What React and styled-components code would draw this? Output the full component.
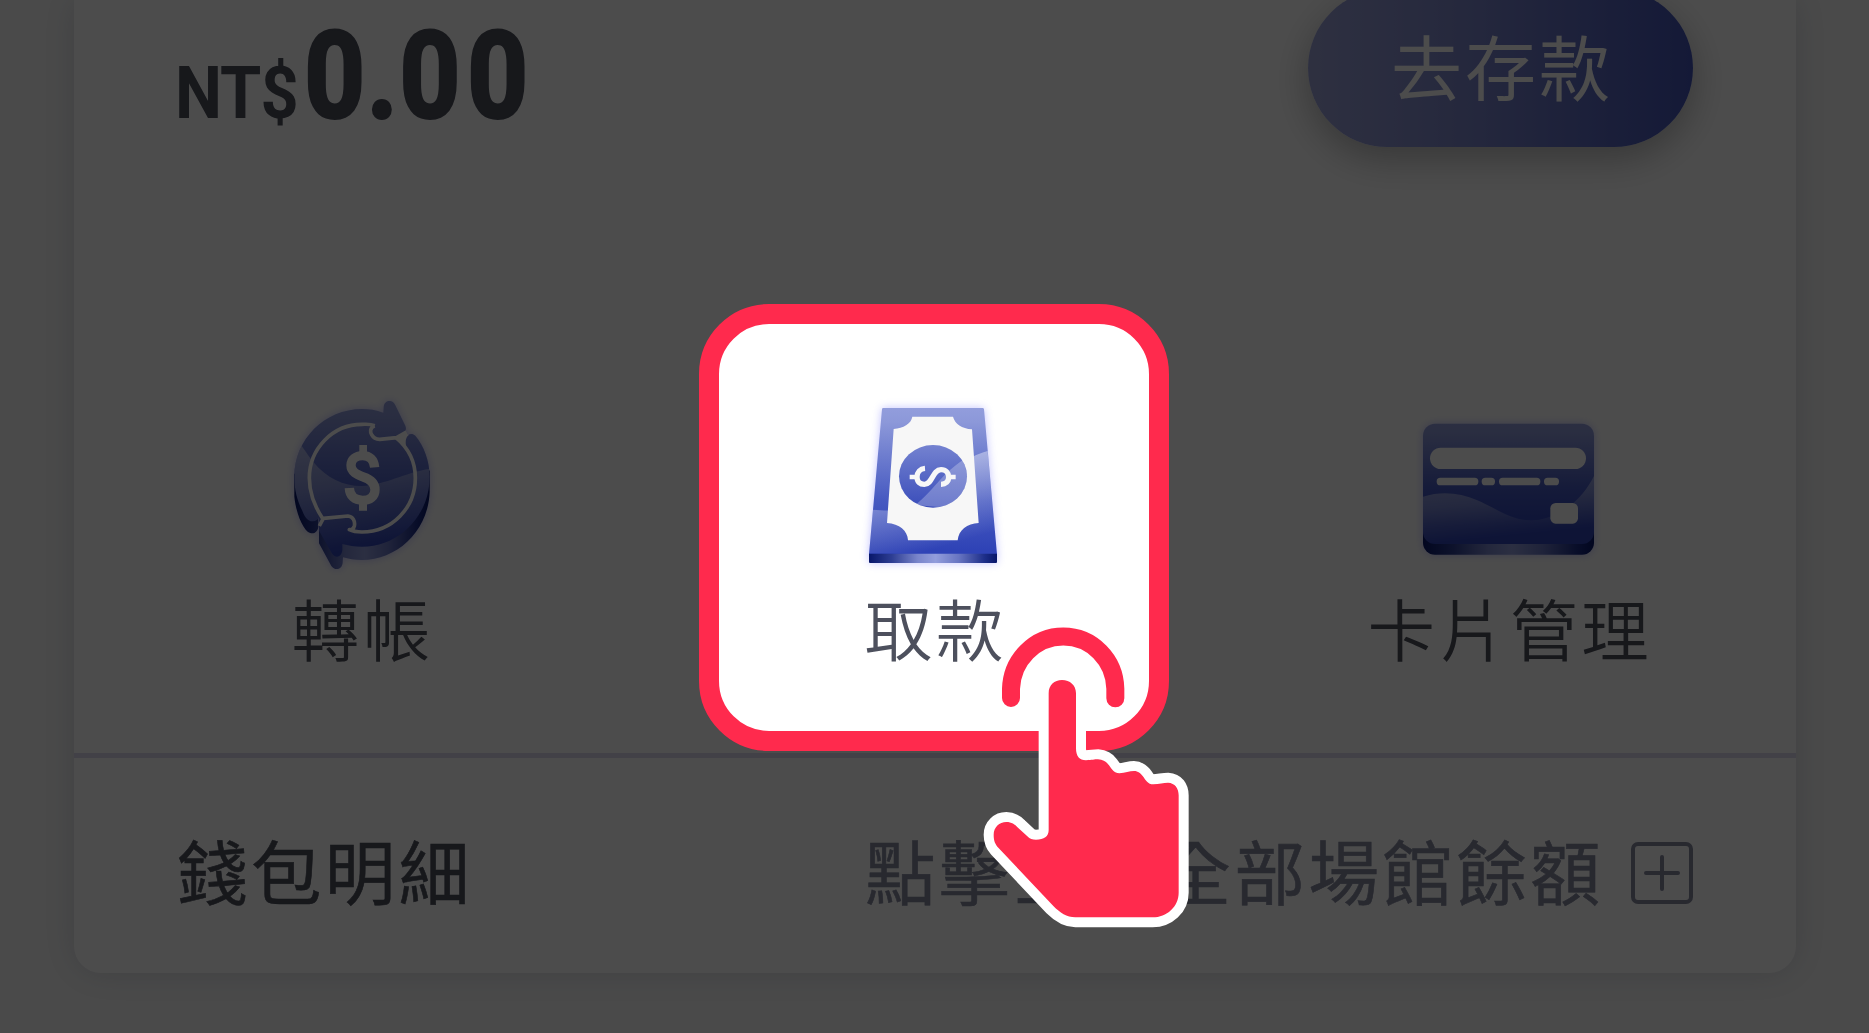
import React from "react";
import styled, { createGlobalStyle } from "styled-components";

const Global = createGlobalStyle`
  html, body { margin: 0; padding: 0; background: #f8f8f8; }
  * { box-sizing: border-box; }
`;

const Page = styled.main`
  position: relative;
  width: 1869px;
  height: 1033px;
  overflow: hidden;
  padding: 0 73px 60px 74px;
  background: #f8f8f8;
  color: #4d505d;
  font-family: "Noto Sans CJK TC", sans-serif;
`;

const Scrim = styled.div`
  position: absolute;
  inset: 0;
  z-index: 1;
  background: rgba(0, 0, 0, 0.7);
`;

const WalletCard = styled.section`
  display: flex;
  flex-direction: column;
  width: 1722px;
  height: 973px;
  border-radius: 0 0 27px 27px;
  background: #fff;
  box-shadow: 0 0 34px rgba(40, 50, 80, 0.16);
`;

const BalanceRow = styled.header`
  display: flex;
  justify-content: space-between;
  align-items: flex-start;
  height: 304px;
  padding: 0 103px 0 101px;
`;

const Balance = styled.div`
  display: flex;
  align-items: baseline;
  padding-top: 2px;
  font-family: Roboto, sans-serif;
  line-height: 148px;
`;

const Currency = styled.span`
  font-size: 72px;
  font-weight: 700;
  letter-spacing: -1px;
  transform: scaleX(0.925);
  transform-origin: 0 50%;
`;

const Amount = styled.span`
  margin-left: -4px;
  font-size: 123px;
  font-weight: 800;
  -webkit-text-stroke: 2px currentColor;
  transform: scaleX(0.865);
  transform-origin: 0 50%;
`;

const Whole = styled.span`
  letter-spacing: 1.3px;
`;

const Cents = styled.span`
  letter-spacing: 7.5px;
`;

const DepositButton = styled.button`
  width: 385px;
  height: 158px;
  margin-top: -11px;
  padding: 0 0 8px 3px;
  border: 0;
  border-radius: 79px;
  background: linear-gradient(90deg, #9ba2d8 0%, #7d87cd 40%, #4455b8 100%);
  box-shadow: 0 12px 36px rgba(0, 0, 0, 0.28);
  color: #fff;
  font: 400 71px/150px "Noto Sans CJK TC", sans-serif;
  letter-spacing: 3px;
`;

const Actions = styled.nav`
  display: grid;
  grid-template-columns: 574px 572px 576px;
  justify-items: center;
  height: 449px;
`;

const ActionTile = styled.div`
  position: relative;
  z-index: ${(p) => (p.$active ? 2 : 0)};
  display: flex;
  flex-direction: column;
  align-items: center;
  width: 470px;
  height: 447px;
  padding-top: 56px;
  border: 20px solid ${(p) => (p.$active ? "#ff2a4d" : "transparent")};
  border-radius: 70px;
  background: ${(p) => (p.$active ? "#fff" : "transparent")};
`;

const Icon = styled.svg`
  display: block;
  flex: none;
  width: ${(p) => p.$w}px;
  height: 200px;
  filter: drop-shadow(0 0 4px rgba(120, 120, 255, 0.45));
`;

const ActionLabel = styled.span`
  padding-left: 4px;
  font-size: 67.5px;
  font-weight: 350;
  line-height: 93px;
  letter-spacing: 3.8px;
  white-space: nowrap;
`;

const Details = styled.footer`
  display: flex;
  align-items: center;
  justify-content: space-between;
  height: 220px;
  padding: 6px 103px 0 103px;
  border-top: 5px solid #dddbee;
  font-size: 70.5px;
  letter-spacing: 3.4px;
  -webkit-text-stroke: 0.6px currentColor;
  white-space: nowrap;
`;

const Expand = styled.div`
  display: flex;
  align-items: center;
  gap: 27px;
  color: #85899f;
`;

const PlusBox = styled.svg`
  width: 62px;
  height: 62px;
  margin-top: 9px;
  fill: none;
  stroke: currentColor;
  stroke-width: 4;
  stroke-linecap: round;
`;

const TapHand = styled.svg`
  position: absolute;
  left: 980px;
  top: 623px;
  z-index: 3;
  width: 214px;
  height: 309px;
`;

function Shades({ id, y1, y2 }) {
  return (
    <defs>
      <linearGradient id={`${id}-face`} gradientUnits="userSpaceOnUse" x1="0" x2="0" y1={y1} y2={y2}>
        <stop offset="0" stopColor="#929ddc" />
        <stop offset="0.1" stopColor="#8c98d9" />
        <stop offset="0.65" stopColor="#4659c1" />
        <stop offset="1" stopColor="#2f43b6" />
      </linearGradient>
      <linearGradient id={`${id}-side`}>
        <stop offset="0" stopColor="#08176a" />
        <stop offset="0.18" stopColor="#2e3e93" />
        <stop offset="0.38" stopColor="#7985cb" />
        <stop offset="0.52" stopColor="#929ddc" />
        <stop offset="0.7" stopColor="#6875c2" />
        <stop offset="0.9" stopColor="#1e2f8a" />
        <stop offset="1" stopColor="#08176a" />
      </linearGradient>
      <linearGradient id={`${id}-sheen`} x1="0" y1="0" x2="0.25" y2="1">
        <stop offset="0" stopColor="#fff" stopOpacity="0.46" />
        <stop offset="0.45" stopColor="#fff" stopOpacity="0.32" />
        <stop offset="0.95" stopColor="#fff" stopOpacity="0" />
      </linearGradient>
    </defs>
  );
}

function TransferIcon() {
  const face =
    "M340 98 L341 82 C342 66 352 62 361 63 C369 64 373 70 376 76 L406 137 C410 147 407 154 400 158 L408 178 C410 163 425 157 436 167 C462 198 479 242 479 290 C479 405 390 500 276 500 C254 500 235 497 217 492 L217 510 C214 534 196 534 187 522 L147 452 V412 C145 418 138 424 128 424 C112 424 104 410 97 392 C82 362 73 330 73 290 C73 178 164 87 276 87 C298 87 318 90 340 98 Z";
  return (
    <Icon $w={190} viewBox="-12 0 570 600">
      <Shades id="transfer" y1={63} y2={500} />
      <path
        fill="url(#transfer-side)"
        d="M73 280 V350 C78 398 96 440 114 456 C130 466 143 456 145 440 V400 Z M479 270 V335 C475 455 380 540 276 540 C254 540 235 537 219 532 L218 548 C216 570 194 573 184 558 L147 490 V420 L400 390 Z"
      />
      <path fill="url(#transfer-face)" d={face} />
      <clipPath id="transfer-clip"><path d={face} /></clipPath>
      <path
        clipPath="url(#transfer-clip)"
        fill="url(#transfer-sheen)"
        d="M60 160 C100 198 105 215 130 246 C170 294 220 318 275 318 C350 315 405 276 490 265 V550 H60 Z"
      />
      <g fill="none" stroke="#fff" strokeWidth="11" strokeLinejoin="round">
        <path d="M314 137 C300 131 288 133 276 133 C188 133 118 206 118 294 C118 340 134 379 157 414 M148 438 L160 415 L234 408 C249 409 256 424 253 438 C250 449 244 450 238 449 C250 455 262 456 276 456 C366 456 436 384 436 294 C436 246 415 204 378 173" />
        <path d="M314 137 C298 143 301 158 305 164 C311 176 320 178 329 178 L380 173 L409 156" />
      </g>
      <path fill="#fff" d="M376 173 L408 158 L416 166 C408 170 406 182 408 198 Z" />
      <path fill="none" stroke="#fff" strokeWidth="28" d="M314 262 C312 239 299 227 278 227 C257 227 243 239 243 256 C243 277 262 284 280 291 C301 298 315 308 315 329 C315 350 299 361 278 361 C254 361 239 348 238 324" />
      <path fill="#fff" d="M268 195 H291 V222 H268 Z M267 366 H291 V392 H267 Z" />
    </Icon>
  );
}

function BillIcon() {
  return (
    <Icon $w={190} viewBox="-3 0 570 600">
      <Shades id="bill" y1={84} y2={510} />
      <linearGradient id="bill-gloss" gradientUnits="userSpaceOnUse" x1="240" y1="260" x2="310" y2="500">
        <stop offset="0" stopColor="#fff" stopOpacity="0.42" />
        <stop offset="1" stopColor="#fff" stopOpacity="0" />
      </linearGradient>
      <clipPath id="bill-clip"><path d="M127 84 H431 L471 521 H87 Z" /></clipPath>
      <path fill="url(#bill-face)" d="M130 84 H428 Q431 84 432 88 L471 523 H87 L126 88 Q126 84 130 84 Z" />
      <path fill="url(#bill-gloss)" clipPath="url(#bill-clip)" d="M80 388 C140 395 200 392 235 365 C290 320 330 245 450 211 L480 521 H80 Z" />
      <path fill="url(#bill-side)" d="M87 521 H471 V546 Q471 549 468 549 H90 Q87 549 87 546 Z" />
      <path fill="#f7f7f7" d="M217 110 H339 C345 132 365 145 396 148 L416 429 C381 431 356 450 353 481 H204 C203 452 178 431 141 429 L161 147 C190 144 213 132 217 110 Z" />
      <linearGradient id="bill-seal" x2="0" y2="1">
        <stop offset="0" stopColor="#7482d0" />
        <stop offset="1" stopColor="#3a4dba" />
      </linearGradient>
      <clipPath id="seal-clip"><ellipse cx="279" cy="289" rx="102" ry="94" /></clipPath>
      <ellipse cx="279" cy="289" rx="102" ry="94" fill="url(#bill-seal)" />
      <path clipPath="url(#seal-clip)" fill="#fff" fillOpacity="0.26" d="M225 375 C280 335 300 285 372 238 L400 390 Z" />
      <g fill="none" stroke="#f7f7f7" strokeWidth="13">
        <path strokeWidth="16" d="M255 265 C241 266 231 277 231 291 C231 306 240 313 253 313 C278 313 277 269 303 269 C318 269 326 279 326 291 C326 305 317 313 303 313" />
        <path d="M209 291 H228 M328 291 H347" />
      </g>
    </Icon>
  );
}

function CardIcon() {
  return (
    <Icon $w={220} viewBox="-6 -60 660 600">
      <Shades id="card" y1={71} y2={375} />
      <rect x="69" y="160" width="513" height="304" rx="36" fill="url(#card-side)" />
      <clipPath id="card-clip"><rect x="69" y="71" width="513" height="361" rx="36" /></clipPath>
      <rect x="69" y="71" width="513" height="361" rx="36" fill="url(#card-face)" />
      <path clipPath="url(#card-clip)" fill="url(#card-sheen)" d="M69 290 C125 272 180 278 232 301 C300 331 335 362 395 361 C480 358 545 300 582 228 V432 H69 Z" />
      <g fill="#fff">
        <rect x="90" y="143" width="468" height="64" rx="32" />
        <rect x="110" y="233" width="125" height="23" rx="11" />
        <rect x="245" y="233" width="40" height="23" rx="11" />
        <rect x="297" y="233" width="124" height="23" rx="11" />
        <rect x="432" y="233" width="45" height="23" rx="11" />
        <rect x="451" y="309" width="83" height="62" rx="16" />
      </g>
    </Icon>
  );
}

const handShape =
  "M626 340 C626 315 643 300 666 300 C690 300 708 316 708 340 V505 C708 528 718 541 738 541 C757 540 762 538 774 538 C790 539 799 545 807 556 C816 568 822 580 838 580 C856 579 868 573 882 573 C895 573 901 580 908 588 C918 601 923 613 940 613 C958 612 970 608 984 608 C1005 609 1016 625 1016 646 V938 C1016 980 980 1012 938 1012 H706 C680 1012 660 998 640 978 L475 803 C465 792 461 782 461 764 C461 742 478 726 499 726 C515 726 524 733 534 743 L562 769 C570 777 577 779 588 779 C612 779 626 770 626 750 Z";

const actions = [
  { label: "轉帳", Glyph: TransferIcon },
  { label: "取款", Glyph: BillIcon, active: true },
  { label: "卡片管理", Glyph: CardIcon },
];

export default function App() {
  return (
    <Page>
      <Global />
      <WalletCard>
        <BalanceRow>
          <Balance>
            <Currency>NT$</Currency>
            <Amount>
              <Whole>0.</Whole>
              <Cents>00</Cents>
            </Amount>
          </Balance>
          <DepositButton>去存款</DepositButton>
        </BalanceRow>
        <Actions>
          {actions.map(({ label, Glyph, active }) => (
            <ActionTile key={label} $active={active}>
              <Glyph />
              <ActionLabel>{label}</ActionLabel>
            </ActionTile>
          ))}
        </Actions>
        <Details>
          <span>錢包明細</span>
          <Expand>
            <span>點擊查看全部場館餘額</span>
            <PlusBox viewBox="0 0 62 62">
              <rect x="2" y="2" width="58" height="58" rx="5" />
              <path d="M15 31 H47 M31 15 V47" />
            </PlusBox>
          </Expand>
        </Details>
      </WalletCard>
      <Scrim />
      <TapHand viewBox="420 129 642 927">
        <path d="M513 354 V326 C516 240 584 169.500 670 169.500 C756 169.500 824 240 826 326 V355" fill="none" stroke="#ff2a4d" strokeWidth="54" strokeLinecap="round" />
        <path d={handShape} fill="#fff" stroke="#fff" strokeWidth="60" strokeLinejoin="round" />
        <path d={handShape} fill="#ff2a4d" />
      </TapHand>
    </Page>
  );
}
